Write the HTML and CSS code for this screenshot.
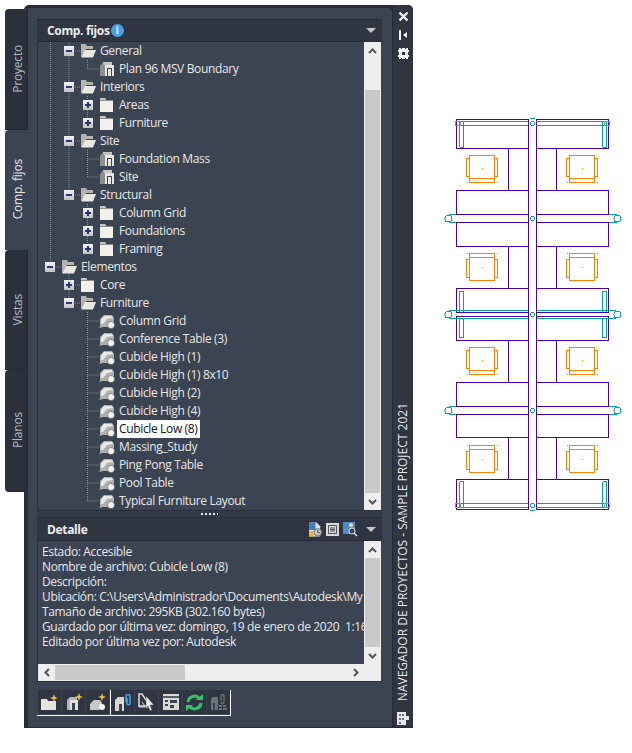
FILE: index.html
```html
<!DOCTYPE html>
<html lang="es">
<head>
<meta charset="utf-8">
<title>Navegador de proyectos</title>
<link rel="stylesheet" href="styles.css">
</head>
<body>
<svg class="defs" width="0" height="0" aria-hidden="true">
  <defs>
    <symbol id="folder" viewBox="0 0 16 16">
      <path d="M1 1h5l1 2h7v12H1z" fill="#f1f0eb"/>
      <path d="M1 1h5l1 2H1z" fill="#c9c8c2"/>
      <path d="M1 3h13v1H1z" fill="#8f9094"/>
    </symbol>
    <symbol id="folder-open" viewBox="0 0 16 16">
      <path d="M1 1h5l1 2h6v3H6L3 14H1z" fill="#b4b3ad"/>
      <path d="M5 7h11l-3 7.500H1.500z" fill="#e9e8e2"/>
    </symbol>
    <symbol id="bldg" viewBox="0 0 16 16">
      <path d="M1 5l3-4h9v3H6v11H1z" fill="#8e8e8c"/>
      <path d="M4 1h9v3H5z" fill="#c6c6c3"/>
      <path d="M6 4h9v11H6z" fill="#e6e6e2"/>
      <path d="M8 7h5v8h-1V8h-3v7H8z" fill="#3b4453"/>
    </symbol>
    <symbol id="block" viewBox="0 0 16 16">
      <path d="M1 6l4-4h8l2 3v4l-5 5H1z" fill="#b0b0ae"/>
      <path d="M5 3h8l1 2-6 1-4 5H2V7z" fill="#e8e8e4"/>
      <path d="M0 14h3v1H0z" fill="#777a7e"/>
      <circle cx="12" cy="12" r="3.500" fill="#f6f6f2" stroke="#555a62" stroke-width=".6"/>
    </symbol>
    <symbol id="up" viewBox="0 0 9 6"><path d="M1 5l3.500-3.500L8 5" fill="none" stroke="#555" stroke-width="2"/></symbol>
    <symbol id="down" viewBox="0 0 9 6"><path d="M1 1l3.500 3.500L8 1" fill="none" stroke="#555" stroke-width="2"/></symbol>
    <symbol id="left" viewBox="0 0 6 9"><path d="M5 1L1.500 4.500 5 8" fill="none" stroke="#555" stroke-width="2"/></symbol>
    <symbol id="right" viewBox="0 0 6 9"><path d="M1 1l3.500 3.500L1 8" fill="none" stroke="#555" stroke-width="2"/></symbol>
    <g id="chair" shape-rendering="crispEdges">
      <path d="M-12.500 -13.500h25v23h-25zM-12.500 9.500v4h25v-4M-12.500 -10.500h-3v18h3M12.500 -10.500h3v18h-3" fill="none" stroke="#ff8000"/>
      <path d="M0 -1h1v1H0zM-15 13h1v1h-1zM15 13h1v1h-1z" fill="#ff8000"/>
    </g>
  </defs>
</svg>

<div class="palette">
  <nav class="tabs">
    <div class="tab tab-tall"><span class="tab-label">Proyecto</span></div>
    <div class="tab tab-active"><span class="tab-label">Comp. fijos</span></div>
    <div class="tab"><span class="tab-label">Vistas</span></div>
    <div class="tab tab-last"><span class="tab-label">Planos</span></div>
  </nav>

  <div class="shell">
    <main class="main">
      <header class="bar">
        <span class="bar-title">Comp. fijos</span><span class="info">i</span>
        <span class="caret"></span>
      </header>

      <section class="tree-pane">
        <div class="tree">
          <svg class="guides" width="326" height="468" aria-hidden="true">
            <path d="M12.500 0V225M12.500 225H23M31 0V153M31 9H42M31 45H42M31 99H42M31 153H42M49.500 18V27H61M49.500 54V81M49.500 63H45M49.500 81H45M49.500 108V135M49.500 117H61M49.500 135H61M49.500 162V207M49.500 171H45M49.500 189H45M49.500 207H45M31 230V261M31 243H42M31 261H42M49.500 270V459M49.500 279H61M49.500 297H61M49.500 315H61M49.500 333H61M49.500 351H61M49.500 369H61M49.500 387H61M49.500 405H61M49.500 423H61M49.500 441H61M49.500 459H61" fill="none" stroke="#8d929b" stroke-dasharray="1 1"/>
          </svg>
          <div class="row l2"><i class="toggle minus"></i><svg class="ico"><use href="#folder-open"/></svg><span class="label">General</span></div>
          <div class="row l3"><i class="toggle none"></i><svg class="ico"><use href="#bldg"/></svg><span class="label">Plan 96 MSV Boundary</span></div>
          <div class="row l2"><i class="toggle minus"></i><svg class="ico"><use href="#folder-open"/></svg><span class="label">Interiors</span></div>
          <div class="row l3"><i class="toggle plus"></i><svg class="ico"><use href="#folder"/></svg><span class="label">Areas</span></div>
          <div class="row l3"><i class="toggle plus"></i><svg class="ico"><use href="#folder"/></svg><span class="label">Furniture</span></div>
          <div class="row l2"><i class="toggle minus"></i><svg class="ico"><use href="#folder-open"/></svg><span class="label">Site</span></div>
          <div class="row l3"><i class="toggle none"></i><svg class="ico"><use href="#bldg"/></svg><span class="label">Foundation Mass</span></div>
          <div class="row l3"><i class="toggle none"></i><svg class="ico"><use href="#bldg"/></svg><span class="label">Site</span></div>
          <div class="row l2"><i class="toggle minus"></i><svg class="ico"><use href="#folder-open"/></svg><span class="label">Structural</span></div>
          <div class="row l3"><i class="toggle plus"></i><svg class="ico"><use href="#folder"/></svg><span class="label">Column Grid</span></div>
          <div class="row l3"><i class="toggle plus"></i><svg class="ico"><use href="#folder"/></svg><span class="label">Foundations</span></div>
          <div class="row l3"><i class="toggle plus"></i><svg class="ico"><use href="#folder"/></svg><span class="label">Framing</span></div>
          <div class="row l1"><i class="toggle minus"></i><svg class="ico"><use href="#folder-open"/></svg><span class="label">Elementos</span></div>
          <div class="row l2"><i class="toggle plus"></i><svg class="ico"><use href="#folder"/></svg><span class="label">Core</span></div>
          <div class="row l2"><i class="toggle minus"></i><svg class="ico"><use href="#folder-open"/></svg><span class="label">Furniture</span></div>
          <div class="row l3"><i class="toggle none"></i><svg class="ico"><use href="#block"/></svg><span class="label">Column Grid</span></div>
          <div class="row l3"><i class="toggle none"></i><svg class="ico"><use href="#block"/></svg><span class="label">Conference Table (3)</span></div>
          <div class="row l3"><i class="toggle none"></i><svg class="ico"><use href="#block"/></svg><span class="label">Cubicle High (1)</span></div>
          <div class="row l3"><i class="toggle none"></i><svg class="ico"><use href="#block"/></svg><span class="label">Cubicle High (1) 8x10</span></div>
          <div class="row l3"><i class="toggle none"></i><svg class="ico"><use href="#block"/></svg><span class="label">Cubicle High (2)</span></div>
          <div class="row l3"><i class="toggle none"></i><svg class="ico"><use href="#block"/></svg><span class="label">Cubicle High (4)</span></div>
          <div class="row l3"><i class="toggle none"></i><svg class="ico"><use href="#block"/></svg><span class="label selected">Cubicle Low (8)</span></div>
          <div class="row l3"><i class="toggle none"></i><svg class="ico"><use href="#block"/></svg><span class="label">Massing_Study</span></div>
          <div class="row l3"><i class="toggle none"></i><svg class="ico"><use href="#block"/></svg><span class="label">Ping Pong Table</span></div>
          <div class="row l3"><i class="toggle none"></i><svg class="ico"><use href="#block"/></svg><span class="label">Pool Table</span></div>
          <div class="row l3"><i class="toggle none"></i><svg class="ico"><use href="#block"/></svg><span class="label">Typical Furniture Layout</span></div>
        </div>
        <div class="vscroll tree-scroll">
          <span class="arrow"><svg class="chev"><use href="#up"/></svg></span>
          <span class="gap g-top"></span>
          <span class="thumb"></span>
          <span class="arrow"><svg class="chev"><use href="#down"/></svg></span>
        </div>
      </section>

      <div class="splitter"><span class="grip"></span></div>

      <header class="bar bar-detail">
        <span class="bar-title">Detalle</span>
        <span class="bar-tools">
          <svg class="tool" width="13" height="15" viewBox="0 0 14 15" aria-hidden="true">
            <path d="M0 0h8l4 4v11H0z" fill="#d9e6f2"/><path d="M0 0h7v8H0z" fill="#3f7fc4"/><path d="M0 9h5v6H0z" fill="#f2b233"/>
            <circle cx="9.500" cy="10.500" r="4" fill="#c9c9c9" stroke="#6a6a6a"/><path d="M9.500 8v3h2" fill="none" stroke="#333"/>
          </svg>
          <svg class="tool" width="13" height="13" viewBox="0 0 13 13" aria-hidden="true">
            <path d="M0 0h13v13H0z" fill="#d8d8d8"/><path d="M2.500 2.500h8v8h-8z" fill="none" stroke="#555"/><path d="M4 5h5M4 6.500h5M4 8h5" stroke="#555"/>
          </svg>
          <svg class="tool" width="15" height="15" viewBox="0 0 15 15" aria-hidden="true">
            <path d="M0 0h12v12H0z" fill="#4d8cc9"/><circle cx="8" cy="3" r="2" fill="#f5e08a"/>
            <circle cx="9" cy="9" r="3" fill="#3b4453" stroke="#ddd"/><path d="M11 11l3 3" stroke="#ddd" stroke-width="1.500"/>
          </svg>
        </span>
        <span class="caret"></span>
      </header>

      <section class="detail">
        <div class="detail-text">
          <p>Estado: Accesible</p>
          <p>Nombre de archivo: Cubicle Low (8)</p>
          <p>Descripción:</p>
          <p>Ubicación: C:\Users\Administrador\Documents\Autodesk\My Projects</p>
          <p>Tamaño de archivo: 295KB (302.160 bytes)</p>
          <p>Guardado por última vez: domingo, 19 de enero de 2020&nbsp; 1:16:40</p>
          <p>Editado por última vez por: Autodesk</p>
        </div>
        <div class="vscroll">
          <span class="arrow"><svg class="chev"><use href="#up"/></svg></span>
          <span class="thumb"></span>
          <span class="arrow"><svg class="chev"><use href="#down"/></svg></span>
        </div>
        <div class="hscroll">
          <span class="arrow-h"><svg class="chev-h"><use href="#left"/></svg></span>
          <span class="thumb-h"></span>
          <span class="arrow-h"><svg class="chev-h"><use href="#right"/></svg></span>
        </div>
        <span class="corner"></span>
      </section>

      <div class="toolbar">
        <div class="tgroup">
          <button class="tbtn"><svg width="18" height="16" viewBox="0 0 18 16" aria-hidden="true"><path d="M0 5h6l1 2h8v9H0z" fill="#e4e3dd"/><path d="M13 0l1 3 3 1-3 1-1 3-1-3-3-1 3-1z" fill="#f5c542"/></svg></button>
          <button class="tbtn"><svg width="18" height="18" viewBox="0 0 18 18" aria-hidden="true"><path d="M2 7l3-3h7v13H2z" fill="#b5b5b2"/><path d="M5 7h8v10H5z" fill="#e2e2de"/><path d="M7 10h3v7H7z" fill="#3b4453"/><path d="M14 0l1 3 3 1-3 1-1 3-1-3-3-1 3-1z" fill="#f5c542"/></svg></button>
          <button class="tbtn"><svg width="18" height="18" viewBox="0 0 18 18" aria-hidden="true"><path d="M1 11l4-4h6l2 3v4l-3 3H1z" fill="#c8c8c5"/><circle cx="13" cy="14" r="3" fill="#f4f4f0"/><path d="M13 0l1 3 3 1-3 1-1 3-1-3-3-1 3-1z" fill="#f5c542"/></svg></button>
        </div>
        <div class="tgroup tgroup-2">
          <button class="tbtn"><svg width="18" height="17" viewBox="0 0 18 17" aria-hidden="true"><path d="M1 6l3-3h6v14H1z" fill="#d8d8d4"/><path d="M5 10h3v7H5z" fill="#3b4453"/><path d="M12 8V2.500a2 2 0 014 0V10a2 2 0 01-3 0V4" fill="none" stroke="#3fa9f5" stroke-width="1.500"/></svg></button>
          <button class="tbtn"><svg width="17" height="18" viewBox="0 0 17 18" aria-hidden="true"><path d="M1 1h3l8 12H1z" fill="none" stroke="#e0e0e0" stroke-width="1.500"/><path d="M4 9l3 4M1 14h10" stroke="#e0e0e0"/><path d="M8 3l8 9h-4l2 5-2 1-2-5-2 3z" fill="#f0f0f0" stroke="#2f3541" stroke-width=".5"/></svg></button>
          <button class="tbtn"><svg width="16" height="16" viewBox="0 0 16 16" aria-hidden="true"><path d="M0 0h16v16H0z" fill="#d8d8d4"/><path d="M0 3h16" stroke="#2f3541" stroke-width="1.500"/><path d="M2 6h3v2H2zM2 10h3v2H2zM7 6h7v3H7zM7 11h4v3H7z" fill="#3b4453"/></svg></button>
          <button class="tbtn"><svg width="17" height="17" viewBox="0 0 17 17" aria-hidden="true"><path d="M2 8a6.500 6.500 0 0111-4" fill="none" stroke="#35c46a" stroke-width="3"/><path d="M15 9a6.500 6.500 0 01-11 4" fill="none" stroke="#35c46a" stroke-width="3"/><path d="M10 6h7V0zM7 11H0v6z" fill="#35c46a"/></svg></button>
          <button class="tbtn"><svg width="18" height="18" viewBox="0 0 18 18" aria-hidden="true"><path d="M1 6l2-2h5v13H1z" fill="#6d7278"/><path d="M3 10h2v7H3z" fill="#3b4453"/><path d="M11 8V3a1.500 1.500 0 013 0v6a1.500 1.500 0 01-3 0" fill="none" stroke="#6d7278" stroke-width="1.300"/><path d="M9 12h3v2H9zM13 12h3v2h-3zM9 15h3v2H9zM13 15h4v2h-4z" fill="#6d7278"/></svg></button>
        </div>
      </div>
    </main>

    <aside class="side">
      <div class="side-icons">
        <svg width="11" height="11" viewBox="0 0 11 11" aria-hidden="true"><path d="M1.500 1.500l8 8M9.500 1.500l-8 8" stroke="#f2f2f2" stroke-width="2.400"/></svg>
        <svg width="9" height="10" viewBox="0 0 9 10" aria-hidden="true"><path d="M0 0h2v10H0zM8 2v6L4 5z" fill="#f2f2f2"/></svg>
        <svg width="11" height="11" viewBox="0 0 11 11" aria-hidden="true"><path d="M1 0h2v1h1V0h3v1h1V0h2v2h1v2h-1v3h1v2h-1v2H8v-1H7v1H4v-1H3v1H1V9H0V7h1V4H0V2h1zM4 4v3h3V4z" fill="#f2f2f2"/></svg>
      </div>
      <span class="side-title">NAVEGADOR DE PROYECTOS - SAMPLE PROJECT 2021</span>
      <svg class="side-doc" width="12" height="14" viewBox="0 0 12 14" aria-hidden="true"><path d="M0 1h9v4h3v4H9v5H0z" fill="#e8e8e8"/><path d="M2 3h2v2H2zM5 3h2v2H5zM2 7h2v2H2zM5 7h2v2H5zM2 11h2v2H2z" fill="#6f747c"/></svg>
    </aside>
  </div>
</div>

<svg class="drawing" width="632" height="753" viewBox="0 0 632 753" aria-label="Plano de cubículos">
  <g fill="none" stroke="#4b00a8">
    <path d="M456.500 119.500h72v29h-72zM536.500 119.500h72v29h-72z"/>
    <path d="M456.500 190.500h72v24h-72zM536.500 190.500h72v24h-72z"/>
    <path d="M456.500 222.500h72v24h-72zM536.500 222.500h72v24h-72z"/>
    <path d="M456.500 288.500h72v24h-72zM536.500 288.500h72v24h-72z"/>
    <path d="M456.500 316.500h72v24h-72zM536.500 316.500h72v24h-72z"/>
    <path d="M456.500 382.500h72v24h-72zM536.500 382.500h72v24h-72z"/>
    <path d="M456.500 414.500h72v23h-72zM536.500 414.500h72v23h-72z"/>
    <path d="M456.500 479.500h72v30h-72zM536.500 479.500h72v30h-72z"/>
    <path d="M528.500 119.500v390M536.500 119.500v390"/>
    <path d="M508.500 148v42M556.500 148v42M508.500 246v42M556.500 246v42M508.500 340v42M556.500 340v42M508.500 437v42M556.500 437v42"/>
  </g>
  <g fill="none" stroke="#00a59b">
    <path d="M456 121.500h72M536 121.500h72M456 125.500h72M536 125.500h72"/>
    <path d="M459.500 121v26M463.500 121v26M602.500 121v26M606.500 121v26"/>
    <path d="M449 214.500h7M449 222.500h7M609 214.500h8M609 222.500h8"/>
    <path d="M449 310.500h79M449 318.500h79M537 310.500h79M537 318.500h79"/>
    <path d="M459.500 291v21M463.500 291v21M602.500 291v21M606.500 291v21M459.500 318v20M463.500 318v20M602.500 318v20M606.500 318v20"/>
    <path d="M449 406.500h7M449 414.500h7M609 406.500h8M609 414.500h8"/>
    <path d="M456 503.500h72M536 503.500h72M456 507.500h72M536 507.500h72"/>
    <path d="M459.500 482v25M463.500 482v25M602.500 482v25M606.500 482v25"/>
    <path d="M530 118.500h5M530 510.500h5"/>
    <circle cx="448.500" cy="218.500" r="3.500"/><circle cx="617.500" cy="218.500" r="3.500"/>
    <circle cx="448.500" cy="314.500" r="3.500"/><circle cx="617.500" cy="314.500" r="3.500"/>
    <circle cx="448.500" cy="410.500" r="3.500"/><circle cx="617.500" cy="410.500" r="3.500"/>
    <circle cx="532.500" cy="218.500" r="2"/><circle cx="532.500" cy="314.500" r="2"/><circle cx="532.500" cy="410.500" r="2"/>
    <circle cx="532.500" cy="123.500" r="2"/><circle cx="532.500" cy="505.500" r="2"/>
    <path d="M459.500 147.500h4M602.500 147.500h4M459.500 291.500h4M602.500 291.500h4M459.500 337.500h4M602.500 337.500h4M459.500 481.500h4M602.500 481.500h4"/>
  </g>
  <g fill="none" stroke="#5fa88a">
    <path d="M455.500 121.500h5v4h-5zM604.500 121.500h5v4h-5zM455.500 503.500h5v4h-5zM604.500 503.500h5v4h-5z"/>
  </g>
  <use href="#chair" transform="translate(482 169)"/>
  <use href="#chair" transform="translate(582 169)"/>
  <use href="#chair" transform="translate(482 267) scale(1 -1)"/>
  <use href="#chair" transform="translate(582 267) scale(1 -1)"/>
  <use href="#chair" transform="translate(482 361)"/>
  <use href="#chair" transform="translate(582 361)"/>
  <use href="#chair" transform="translate(482 459) scale(1 -1)"/>
  <use href="#chair" transform="translate(582 459) scale(1 -1)"/>
</svg>
</body>
</html>
```
FILE: styles.css
```css
* { box-sizing: border-box; }

html, body { margin: 0; padding: 0; background: #fff; }

body {
  position: relative;
  width: 632px;
  height: 753px;
  overflow: hidden;
  font-family: "Open Sans", "Noto Sans", "Liberation Sans", sans-serif;
  font-size: 12px;
  letter-spacing: -.35px;
  color: #e8e8e8;
}

.defs { position: absolute; }

.palette {
  display: flex;
  width: 408px;
  height: 723px;
  margin: 5px 0 0 5px;
}

/* Tabs */
.tabs {
  position: relative;
  z-index: 2;
  flex: none;
  width: 23px;
  margin-right: -4px;
  padding-top: 4px;
}

.tab {
  display: flex;
  align-items: center;
  justify-content: center;
  height: 120px;
  padding-left: 3px;
  background: #2b303b;
  border-bottom: 1px solid #232832;
  border-right: 1px solid #232832;
  border-radius: 4px 0 0 0;
}

.tab-tall { height: 121px; }

.tab-active {
  background: #3b4453;
  border-right: 0;
  border-bottom-color: #3b4453;
}

.tab-last {
  height: 122px;
  border-radius: 4px 0 0 4px;
}

.tab-label {
  writing-mode: vertical-rl;
  transform: rotate(180deg);
  color: #b4b8bf;
  line-height: 14px;
  letter-spacing: -.2px;
}

.tab-active .tab-label { color: #e8e8e8; }

/* Shell */
.shell {
  display: flex;
  flex: 1;
  padding: 3px 0 1px 4px;
  background: #262b35;
  border-radius: 5px 5px 0 0;
}

.main {
  display: flex;
  flex-direction: column;
  width: 364px;
  padding: 11px 10px 0 9px;
  background: #3b4453;
  border-radius: 0 5px 0 0;
}

.bar {
  display: flex;
  align-items: center;
  flex: none;
  height: 22px;
  padding-left: 10px;
  background: #2f3541;
  border-top: 1px solid #262b35;
}

.bar-title {
  font-weight: 700;
  color: #eee;
}

.info {
  width: 13px;
  height: 13px;
  margin-left: 1px;
  border-radius: 50%;
  background: #4aa3e8;
  color: #fff;
  font-size: 10px;
  font-weight: 700;
  line-height: 13px;
  text-align: center;
}

.caret {
  width: 0;
  height: 0;
  margin-left: auto;
  margin-right: 6px;
  border-left: 5px solid transparent;
  border-right: 5px solid transparent;
  border-top: 5px solid #c4c4c4;
}

/* Tree */
.tree-pane {
  display: flex;
  flex: none;
  height: 469px;
  background: #3b4453;
  border-top: 1px solid #262b35;
  border-left: 1px solid #2a303b;
  border-right: 1px solid #3b4453;
}

.tree {
  position: relative;
  flex: 1;
  min-width: 0;
}

.guides {
  position: absolute;
  left: 0;
  top: 0;
}

.row {
  position: relative;
  display: flex;
  align-items: center;
  height: 18px;
  white-space: nowrap;
}

.l1 { padding-left: 7px; }
.l2 { padding-left: 26px; }
.l3 { padding-left: 45px; }

.toggle {
  position: relative;
  flex: none;
  width: 10px;
  height: 10px;
  margin-right: 6px;
  background: linear-gradient(#f4f4f4, #c2c2c2);
}

.toggle.none { background: none; }

.toggle.minus::before,
.toggle.plus::before {
  content: "";
  position: absolute;
  left: 2px;
  top: 4px;
  width: 6px;
  height: 2px;
  background: #28367a;
}

.toggle.plus::after {
  content: "";
  position: absolute;
  left: 4px;
  top: 2px;
  width: 2px;
  height: 6px;
  background: #28367a;
}

.ico {
  flex: none;
  width: 16px;
  height: 16px;
  margin-right: 2px;
}

.label {
  height: 18px;
  padding: 0 2px;
  line-height: 17px;
  color: #e8e8e8;
}

.selected {
  background: #fff;
  color: #111;
}

/* Scrollbars */
.vscroll {
  display: flex;
  flex-direction: column;
  flex: none;
  width: 17px;
  background: #eee;
}

.arrow {
  display: flex;
  align-items: center;
  justify-content: center;
  flex: none;
  height: 17px;
}

.chev { width: 9px; height: 6px; }

.gap.g-top { flex: none; height: 31px; }

.thumb {
  flex: 1;
  margin: 0 1px;
  background: #c9c9c9;
}

.hscroll {
  display: flex;
  height: 17px;
  background: #eee;
}

.arrow-h {
  display: flex;
  align-items: center;
  justify-content: center;
  flex: none;
  width: 17px;
}

.chev-h { width: 6px; height: 9px; }

.thumb-h {
  flex: none;
  width: 130px;
  margin: 1px 0;
  background: #c9c9c9;
}

.arrow-h:last-child { margin-left: auto; }

.corner { background: #eee; }

/* Splitter and detail */
.splitter {
  display: flex;
  align-items: center;
  justify-content: center;
  flex: none;
  height: 8px;
  background: #343b48;
  border-top: 1px solid #2a303b;
  border-bottom: 1px solid #2a303b;
}

.grip {
  width: 17px;
  height: 2px;
  background: repeating-linear-gradient(90deg, #e8e8e8 0 2px, transparent 2px 4px);
}

.bar-detail { height: 23px; border-top: 0; border-bottom: 1px solid #262b35; }

.bar-tools {
  display: flex;
  align-items: center;
  gap: 4px;
  margin-left: auto;
}

.bar-detail .caret { margin-left: 8px; }

.tool { display: block; }

.detail {
  display: grid;
  flex: none;
  grid-template-columns: 1fr 17px;
  grid-template-rows: 1fr 17px;
  height: 141px;
  background: #3b4453;
  border-left: 1px solid #2a303b;
  border-right: 1px solid #3b4453;
  border-bottom: 1px solid #2a303b;
}

.detail-text {
  min-width: 0;
  overflow: hidden;
  padding: 3px 0 0 4px;
  white-space: nowrap;
}

.detail-text p {
  margin: 0;
  line-height: 15px;
}

/* Toolbar */
.toolbar {
  display: flex;
  flex: none;
  margin-top: 8px;
}

.tgroup {
  display: flex;
  gap: 1px;
  height: 26px;
  padding: 0 1px 1px;
  border-bottom: 1px solid #fff;
}

.tgroup-2 {
  padding: 0 0 1px;
  border-left: 1px solid #fff;
  border-right: 1px solid #fff;
}

.tbtn {
  display: flex;
  align-items: center;
  justify-content: center;
  width: 23px;
  height: 24px;
  padding: 0;
  background: #2f3541;
  border: 0;
}

/* Side title */
.side {
  display: flex;
  flex-direction: column;
  align-items: center;
  flex: 1;
  padding: 6px 0 2px;
  margin-top: -3px;
  background: #2f3541;
  border-left: 1px solid #262b35;
  border-radius: 0 5px 0 0;
}

.side-icons {
  display: flex;
  flex-direction: column;
  align-items: center;
  gap: 8px;
}

.side-icons svg { display: block; }

.side-title {
  margin-top: auto;
  margin-bottom: 10px;
  writing-mode: vertical-rl;
  transform: rotate(180deg);
  color: #e8e8e8;
  line-height: 14px;
  letter-spacing: 0;
  white-space: nowrap;
}

.side-doc { display: block; flex: none; }

/* Drawing on the free canvas */
.drawing {
  position: absolute;
  left: 0;
  top: 0;
  pointer-events: none;
}

.drawing path, .drawing circle { shape-rendering: crispEdges; }
```
